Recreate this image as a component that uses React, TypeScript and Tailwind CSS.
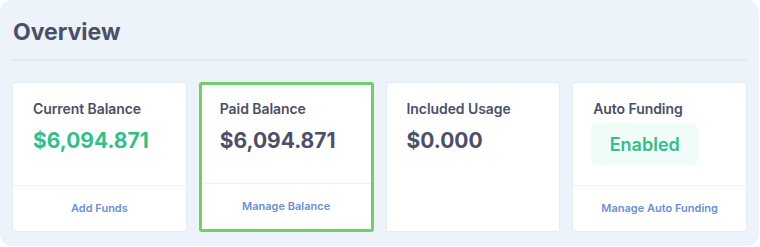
const CARDS = [
  { title: 'Current Balance', value: '$6,094.871', tone: 'green', link: 'Add Funds' },
  { title: 'Paid Balance', value: '$6,094.871', tone: 'dark', link: 'Manage Balance', active: true },
  { title: 'Included Usage', value: '$0.000', tone: 'dark' },
  { title: 'Auto Funding', badge: 'Enabled', link: 'Manage Auto Funding' },
];

type Card = {
  title: string;
  value?: string;
  tone?: string;
  link?: string;
  badge?: string;
  active?: boolean;
};

function StatCard({ card }: { card: Card }) {
  return (
    <div
      className={`flex flex-col h-[150px] bg-white rounded-[3px] ${
        card.active ? 'border-[3px] border-[#6fd06a]' : 'border border-[#e4ebf4]'
      }`}
    >
      {/* Body */}
      <div className={`flex-1 ${card.active ? 'pl-[18px] pt-[14px]' : 'pl-5 pt-4'}`}>
        <div className="text-[14px] font-semibold text-[#4b5068] leading-5 tracking-[-0.005em]">{card.title}</div>
        {card.value && (
          <div
            className={`mt-[8px] text-[21px] font-bold leading-7 ${
              card.tone === 'green' ? 'text-[#33bf89]' : 'text-[#4b5068]'
            }`}
          >
            {card.value}
          </div>
        )}
        {card.badge && (
          <div className="mt-[4px] -ml-[2px] w-[107px] h-[42px] rounded-md bg-[#effcf8] grid place-items-center text-[18px] font-semibold text-[#36bd8a]">
            {card.badge}
          </div>
        )}
      </div>

      {/* Footer */}
      {card.link && (
        <div className="h-[46px] border-t border-[#eef2f8] grid place-items-center">
          <span className="text-[11px] font-semibold text-[#6d90d6]">{card.link}</span>
        </div>
      )}
    </div>
  );
}

export default function App() {
  return (
    <div className="w-[760px] h-[247px] bg-white" style={{ fontFamily: 'Inter, "Noto Sans", sans-serif' }}>
      <div className="w-[759px] h-[246px] bg-[#edf3fa] rounded-[12px] px-3 pt-[18px]">
        <h1 className="pl-[1px] text-[23px] font-bold text-[#4b5068] leading-7">Overview</h1>
        <div className="mt-[13px] h-[2px] bg-[#e0e8f1]" />
        <div className="mt-[21px] grid grid-cols-4 gap-3">
          {CARDS.map((c) => (
            <StatCard key={c.title} card={c} />
          ))}
        </div>
      </div>
    </div>
  );
}
